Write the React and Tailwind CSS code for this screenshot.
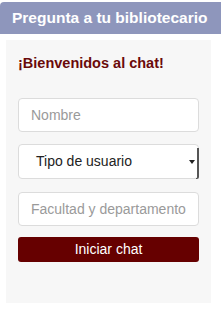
import React from 'react'

const font = { fontFamily: '"Liberation Sans", Arial, sans-serif' }

const Field = ({ placeholder }) => (
  <div className="h-[34px] w-full rounded-[4px] border border-[#dcdcdc] bg-white px-3 flex items-center text-[14px] text-[#9a9a9a]">
    {placeholder}
  </div>
)

const App = () => {
  return (
    <div className="w-[221px] h-[310px] bg-white" style={font}>
      <div className="pt-[2px]">
        <div className="h-[32px] bg-[#8e96bc] rounded-tl-[4px] flex items-center pl-[12px] text-white font-bold text-[15.5px] whitespace-nowrap">
          Pregunta a tu bibliotecario
        </div>
      </div>

      <div className="mx-[6px] mt-[6px] w-[205px] h-[263px] bg-[#f7f7f7] px-[12px] pt-[15px]">
        <div className="text-[14.5px] font-bold text-[#6a0a0a] leading-[17px]">¡Bienvenidos al chat!</div>

        <div className="mt-[26px] flex flex-col">
          <Field placeholder="Nombre" />

          <div className="mt-[12px] h-[35px] w-full rounded-[4px] border border-[#dcdcdc] bg-white flex items-center relative">
            <span className="pl-[17px] text-[14px] text-[#222]">Tipo de usuario</span>
            <div className="absolute right-[-1px] top-[3px] bottom-[-1px] w-[3px] border-r-2 border-b border-[#555] rounded-br-[2px]" />
            <div className="absolute right-[3px] top-[15px] w-0 h-0 border-l-[3px] border-r-[3px] border-t-[4px] border-l-transparent border-r-transparent border-t-[#222]" />
          </div>

          <div className="mt-[13px]">
            <Field placeholder="Facultad y departamento" />
          </div>

          <button className="mt-[11px] h-[25px] w-full rounded-[3px] bg-[#660000] text-white text-[14px] flex items-center justify-center">
            Iniciar chat
          </button>
        </div>
      </div>
    </div>
  )
}

export default App
